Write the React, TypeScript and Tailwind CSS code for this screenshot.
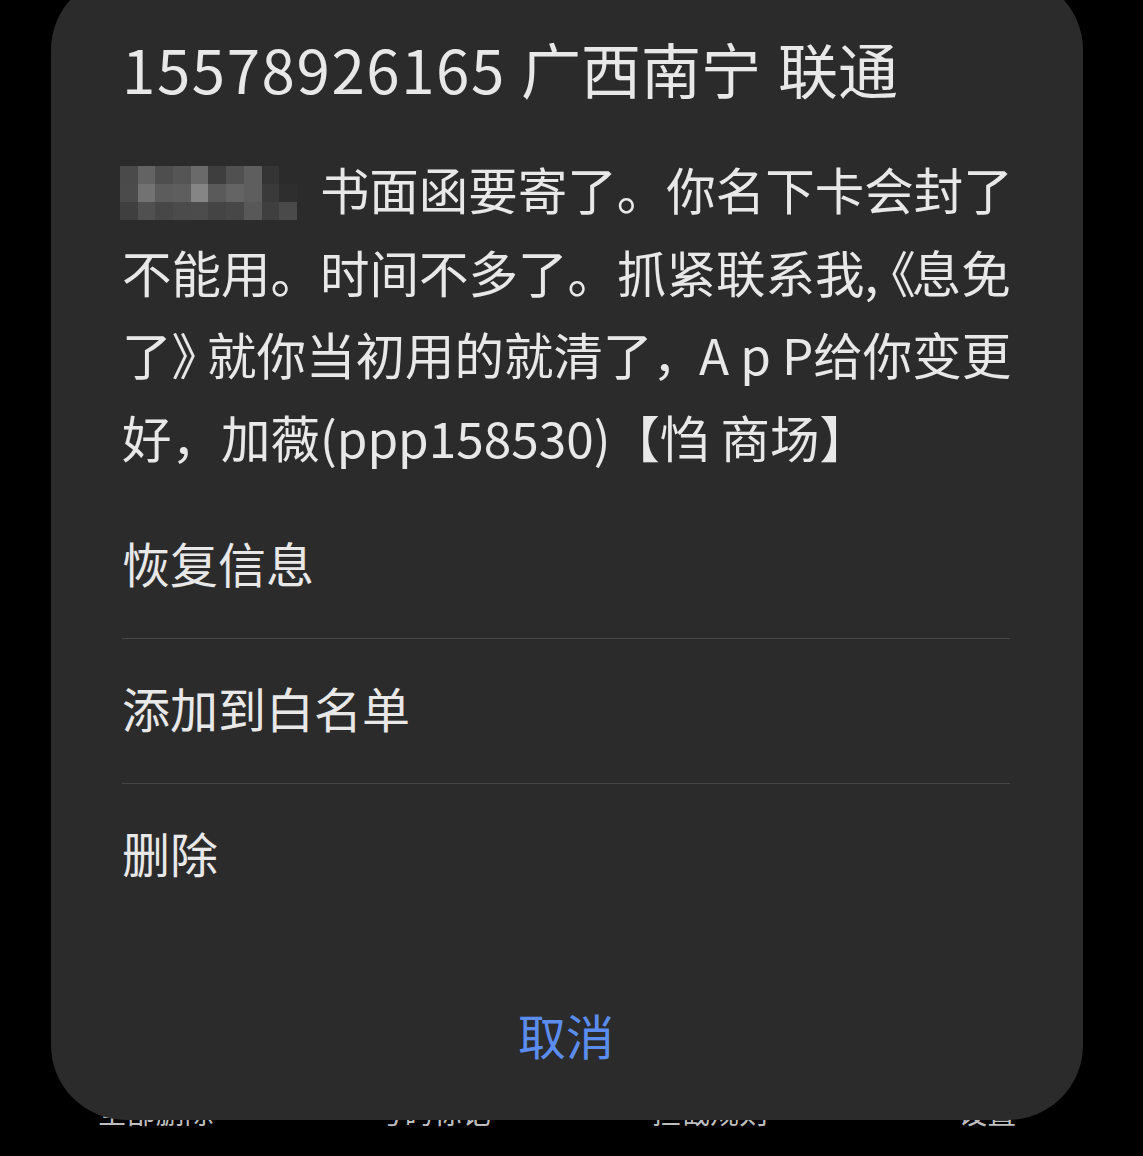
import React from "react";

const blurRows: string[][] = [
  ["bg-[#4a4a4a]", "bg-[#636363]", "bg-[#4e4e4e]", "bg-[#555555]", "bg-[#6a6a6a]", "bg-[#3e3e3e]", "bg-[#505050]", "bg-[#5e5e5e]", "bg-[#343434]", "bg-[#2b2b2b]"],
  ["bg-[#4b4b4b]", "bg-[#727272]", "bg-[#5c5c5c]", "bg-[#5e5e5e]", "bg-[#858585]", "bg-[#5a5a5a]", "bg-[#646464]", "bg-[#5e5e5e]", "bg-[#3a3a3a]", "bg-[#2e2e2e]"],
  ["bg-[#3f3f3f]", "bg-[#505050]", "bg-[#474747]", "bg-[#4b4b4b]", "bg-[#4c4c4c]", "bg-[#444444]", "bg-[#474747]", "bg-[#585858]", "bg-[#3f3f3f]", "bg-[#4a4a4a]"],
];

function Pixelated() {
  return (
    <span className="inline-flex flex-col align-middle mr-[23px] ml-[-2px] blur-[0.6px] relative top-[-4px]">
      {blurRows.map((row, i) => (
        <span key={i} className="flex">
          {row.map((c, j) => (
            <span key={j} className={`${c} block w-[17.7px] h-[18px]`} />
          ))}
        </span>
      ))}
    </span>
  );
}

export default function App() {
  return (
    <div className="min-h-[1156px] h-[1156px] overflow-hidden bg-black flex flex-col font-['Noto_Sans_CJK_SC','Noto_Sans',sans-serif]">
      <div className="relative z-10 ml-[51px] mr-[60px] mt-[-25px] h-[1145px] shrink-0 rounded-[75px] bg-[#2b2b2b] flex flex-col pl-[71px] pr-[73px] pt-[58px] text-[#e8e8e8]">
        <div className="text-[60px] leading-[70px] whitespace-nowrap">
          <span className="tracking-[1.6px]">15578926165</span>
          <span className="ml-[15px]">广西南宁</span>
          <span className="ml-[17px]">联通</span>
        </div>
        <div className="mt-[45px] text-[49.5px] leading-[82.5px] whitespace-nowrap">
          <div>
            <Pixelated />
            书面函要寄了。你名下卡会封了
          </div>
          <div>
            不能用。时间不多了。抓紧联系我<span className="tracking-[-12px]">,</span>
            <span className="tracking-[-4px]">《</span>息免
          </div>
          <div>
            了<span className="tracking-[-14px]">》</span>就你当初用的就清了<span className="tracking-[-3px]">，</span>A p P给你变更
          </div>
          <div>好，加薇(ppp158530)【㤘 商场】</div>
        </div>
        <div className="mt-[15px] flex flex-col text-[48px]">
          <div className="h-[145px] flex items-center pb-[8px]">恢复信息</div>
          <div className="h-[145px] flex items-center pb-[8px] border-t border-[#464646]">添加到白名单</div>
          <div className="h-[145px] flex items-center pb-[8px] border-t border-[#464646]">删除</div>
        </div>
        <div className="mt-auto pb-[46px] h-[126px] flex items-end justify-center">
          <div className="h-[80px] flex items-center text-[48px] text-[#5b8def]">取消</div>
        </div>
      </div>
      <div className="grid grid-cols-4 px-[17px] mt-[-29px] text-[29px] leading-[40px] text-[#bdbdbd] text-center">
        <div>全部删除</div>
        <div>号码标记</div>
        <div>拦截规则</div>
        <div>设置</div>
      </div>
    </div>
  );
}
